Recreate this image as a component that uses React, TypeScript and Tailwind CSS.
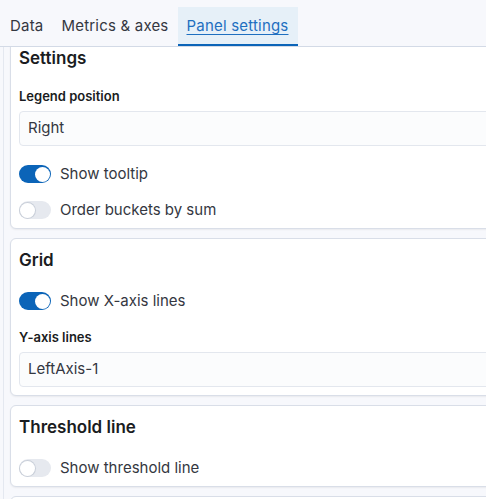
import React from 'react';

function Toggle({ on }: { on: boolean }) {
  return (
    <span
      className={`relative inline-flex h-[18px] w-[32px] shrink-0 items-center rounded-full ${
        on ? 'bg-[#0b64b8]' : 'bg-[#e6e9ef]'
      }`}
    >
      <span
        className={`absolute top-[1.5px] h-[15px] w-[15px] rounded-full bg-white ${
          on ? 'left-[15.5px]' : 'left-[1px] shadow-[0_0_0_1px_#c9cfd9]'
        }`}
      />
    </span>
  );
}

function SwitchRow({ on, label }: { on: boolean; label: string }) {
  return (
    <div className="flex h-5 items-center gap-[9px]">
      <Toggle on={on} />
      <span className="text-[15px] text-[#343741]">{label}</span>
    </div>
  );
}

function Field({ label, value }: { label: string; value: string }) {
  return (
    <div>
      <div className="mb-[6px] h-[18px] text-[13px] font-semibold leading-[18px] text-[#1a1c21]">{label}</div>
      <div className="flex h-[35px] items-center rounded-[4px] border border-[#e3e7ee] bg-[#fbfcfd] px-2 text-[15px] text-[#343741]">
        {value}
      </div>
    </div>
  );
}

function Card({ title, children }: { title: string; children: React.ReactNode }) {
  return (
    <div className="-mr-8 rounded-[6px] border border-[#d9dee8] bg-white p-2 shadow-[0_1px_2px_rgba(0,0,0,0.06)]">
      <h2 className="h-6 pt-[1px] text-[17px] font-semibold leading-6 text-[#1a1c21]">{title}</h2>
      {children}
    </div>
  );
}

export default function App() {
  const tabs = ['Data', 'Metrics & axes', 'Panel settings'];

  return (
    <div className="flex h-[499px] w-[486px] flex-col overflow-hidden bg-[#f7f8fc] font-['Inter',sans-serif]">
      <div className="flex h-[47px] shrink-0 items-end border-b border-[#d3dae6] pl-[1px]">
        {tabs.map((t, i) => {
          const active = i === 2;
          return (
            <div
              key={t}
              className={`flex h-[39px] items-center px-[9px] text-[15px] tracking-[0.2px] ${
                active
                  ? 'border-b-2 border-[#0b64b8] bg-[#e6f0f8] pt-[2px] text-[#1e6fc0] underline underline-offset-[3px]'
                  : 'text-[#343741]'
              }`}
            >
              {t}
            </div>
          );
        })}
      </div>

      <div className="ml-[3px] flex-1 overflow-hidden border-l border-[#e4e8f0] pl-[6px]">
        <div className="-mt-[11px] flex flex-col gap-[9px]">
          <Card title="Settings">
            <div className="mt-[18px]">
              <Field label="Legend position" value="Right" />
            </div>
            <div className="mt-[18px]">
              <SwitchRow on label="Show tooltip" />
            </div>
            <div className="mt-[16px]">
              <SwitchRow on={false} label="Order buckets by sum" />
            </div>
          </Card>

          <Card title="Grid">
            <div className="mt-[20px]">
              <SwitchRow on label="Show X-axis lines" />
            </div>
            <div className="mt-[17px]">
              <Field label="Y-axis lines" value="LeftAxis-1" />
            </div>
          </Card>

          <Card title="Threshold line">
            <div className="mt-[20px]">
              <SwitchRow on={false} label="Show threshold line" />
            </div>
          </Card>

          <div className="-mr-8 h-12 rounded-[6px] border border-[#d9dee8] bg-white" />
        </div>
      </div>
    </div>
  );
}
